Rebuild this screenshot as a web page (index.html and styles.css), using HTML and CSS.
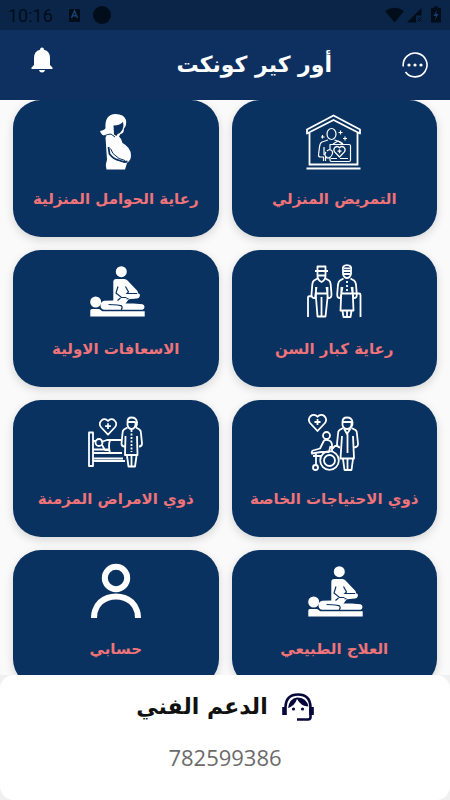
FILE: index.html
```html
<!DOCTYPE html>
<html lang="ar" dir="rtl">
<head>
  <meta charset="UTF-8">
  <meta name="viewport" content="width=device-width, initial-scale=1.0">
  <title>أور كير كونكت</title>
  <link rel="stylesheet" href="styles.css">
</head>
<body>
  <!-- Shared drawings -->
  <svg class="defs" aria-hidden="true">
    <symbol id="massage" viewBox="0 0 60 60">
      <circle cx="35.3" cy="11.7" r="5.5" fill="#fff"/>
      <path fill="#fff" d="M27.3 22q0-3 3-3h8q2 0 3.200 1.600L51.500 31q1 1.500 0 2.500h1.500q1.500 1 .8 2.700-.7 2.300-3 2.300l-8 .8-3.300 4.200h8l9 .7q2 .8 2 2.800t-2 2.800H18q-3.500-.7-3.500-4.500 0-3.500 3.500-4.500l9.300-.4z"/>
      <path fill="none" stroke="#0a3260" stroke-width="1.200" d="M22.500 44.500l9 .5 4 .8q1.500 2.500-.5 4M31.500 40.500l3-2.500M32 26.500l-2 6.500 5.500 4.500h5M39.500 26.500l3 5.500-1.500 1.500h10M42.500 38.500l-2 .3"/>
      <circle cx="9.700" cy="42" r="5.500" fill="#fff"/>
      <path fill="#fff" d="M4.300 50.500q0-1.500 1.500-1.500h7.500l3 2.300h42.400v5.200H4.300z"/>
    </symbol>
    <symbol id="heart" viewBox="0 0 20 20">
      <path d="M10 18.500L2.500 10.500C-1 5.500 5.500-1 10 4.200 14.500-1 21 5.500 17.500 10.500zM10 6.500v6M7 9.500h6"/>
    </symbol>
  </svg>

  <div class="app">
    <!-- Device status bar -->
    <div class="status-bar" dir="ltr">
      <span class="clock">10:16</span>
      <svg class="status-left" width="46" height="18" viewBox="0 0 46 18">
        <rect x="0" y="3" width="11" height="13" rx="1" fill="#020d1c"/>
        <path d="M2.500 12L5.500 5l3 7M3.500 9.800h4" fill="none" stroke="#17406e" stroke-width="1.500"/>
        <circle cx="33" cy="9" r="9" fill="#020d1c"/>
      </svg>
      <svg class="status-right" width="57" height="18" viewBox="0 0 57 18" fill="#020d1c">
        <path d="M0 5Q9.500-1.500 19 5L9.500 16.500zM22 16.500L36.500 2v7.500H31v7z"/>
        <path d="M32.500 11.500l4 4m0-4l-4 4" stroke="#020d1c"/>
        <path d="M49 2V.5h4V2h3v14.500H46V2z"/>
        <path d="M52 4l-3.500 6H51l-1 4 3.500-6H51z" fill="#17406e"/>
      </svg>
    </div>

    <!-- Header -->
    <header class="header">
      <button class="icon-button" type="button" aria-label="القائمة">
        <svg width="26" height="26" viewBox="0 0 26 26">
          <path d="M1.300 14.500A11.900 11.900 0 1 1 3.500 20" fill="none" stroke="#fff" stroke-width="1.600"/>
          <circle cx="7" cy="13" r="1.600" fill="#fff"/><circle cx="13" cy="13" r="1.600" fill="#fff"/><circle cx="19" cy="13" r="1.600" fill="#fff"/>
        </svg>
      </button>
      <h1>أور كير كونكت</h1>
      <button class="icon-button bell" type="button" aria-label="الإشعارات">
        <svg width="22" height="26" viewBox="0 0 22 26" fill="#fff">
          <path d="M9 2.800Q9 .5 11 .5t2 2.300q6 1.400 6 8.200v7l2.500 2.500V22H.5v-1.500L3 18v-7q0-6.800 6-8.200zM8 23h6q-.5 2.500-3 2.500T8 23z"/>
        </svg>
      </button>
    </header>

    <!-- Services -->
    <main class="services">
      <a class="card" href="#">
        <svg class="line" viewBox="0 0 60 60">
          <path d="M3 19.500L29.500 5.500 56 19.500v4L29.500 10 3 23.500zM5.500 23v32.500M53.500 23v32.500M5.500 54.500h48M2.500 58.500h54"/>
          <g class="thin">
            <ellipse cx="27.500" cy="24" rx="4.500" ry="5.500"/>
            <path d="M24 30l-6 2q-2 1-2.500 5l-1 8q0 2 2 2h3v4M20 37v8M30.500 30l6 2q2 .8 2.500 2.500M23.500 47h-2v4"/>
            <path d="M26 39v-4.500h19q1.500 0 1.500 1.500v14q0 1.500-1.500 1.500H27.500Q26 51.500 26 50v-3M23 41q2-2 4-1t1.500 3.500-3 4-4-1 .5-4.500M29 34l5-3 5 3.500M27 48.500h6M36 48.500h8"/>
            <path d="M36.500 20.500v4M34.500 22.500h4M41 26.500v4M39 28.500h4M18.500 25v3.500M17 27h3.500"/>
          </g>
          <use href="#heart" x="29" y="35" width="13" height="13" stroke-width="2"/>
        </svg>
        <span>التمريض المنزلي</span>
      </a>
      <a class="card" href="#">
        <svg viewBox="0 0 60 60">
          <path fill="#fff" d="M19.500 18q-1-13.500 10-14 8.500 0 10.500 6 1 5-2 8.500 0 5-3.500 5.500l-1.500 2.500q3 2.500 3.500 6.500 8.500 4.500 8.500 12.500 0 4.500-4 7.500l-2 6.500H20.500q-1.500-5 .5-10l-1.500-22 .8-1.500q-5 0-6.300-5 5-1 5.500-3z"/>
          <path fill="#0a3260" d="M27.500 15.500q6 0 9.500-3.500 1.500 6-2 9.500l-1 1.500q-3 .5-3.500 3l-2.500-1.500z"/>
          <path fill="none" stroke="#0a3260" stroke-width="1.800" d="M22.500 37l1 7q4 5 8.500 6l6.500 2 3-.5"/>
          <path fill="none" stroke="#0a3260" d="M24.500 38.500l2.500 5 6 5 6 2M17.500 26q5-2 7.500-2l4 3"/>
        </svg>
        <span>رعاية الحوامل المنزلية</span>
      </a>
      <a class="card" href="#">
        <svg class="line" viewBox="0 0 60 60">
          <path d="M11 11h13M13.500 10.500V6.500h8v4M13.500 11v5q0 4 4 6 4-2 4-6v-5M14 15.500h7"/>
          <path d="M13.500 18.500l-3.500 2q-1.500 1-1.700 4L7.500 34.500q0 4 3.500 3.500l1.500-11M21.500 18.500l3.500 2q1.500 1 1.700 4l.8 10q0 4-3.500 3.500l-1.500-11M12 27v11l1.500 18.500h8L23.500 38V27M11.500 33.500h12M17.500 37v19M4 57V37.500q0-1.500 3.500-1.500"/>
          <path d="M39 10q-1-4.800 4-4.800t4 4.800v4q-1 4-4 4t-4-4zM39 11h8M40 8.300h6M40 14h6"/>
          <path d="M39.500 18.500l-3.500 2q-1.500 1-2 4l-.8 10q0 4 3.300 3.500l2-11M46.500 18.500l3.500 2q1.500 1 2 4l.8 10q0 4-3.300 3.500l-2-11M37.500 27l-1 23.500h13L48.500 27M37.500 33.500H55q1.500 0 1.500 1.500v22M38.500 51l1 6h7l1-6M43 51v6"/>
          <path stroke-dasharray="2 2" d="M43 21v11"/>
        </svg>
        <span>رعاية كبار السن</span>
      </a>
      <a class="card" href="#">
        <svg viewBox="0 0 60 60"><use href="#massage"/></svg>
        <span>الاسعافات الاولية</span>
      </a>
      <a class="card" href="#">
        <svg class="line" viewBox="0 0 60 60">
          <use href="#heart" x="3.500" y="2.500" width="20" height="20"/>
          <circle cx="22.500" cy="25.500" r="3.500"/>
          <path d="M20 30.500l-4 8-7 2q-2 1-1 3l9-1.500M25 30.500q3 1 3 5v6M20 30.500q2.500-1.500 5 0M17 42h8l1.500-6M12 44v11M9 46h8M28 39l3-3h3"/>
          <circle cx="25.500" cy="50.500" r="9.300"/><circle cx="25.500" cy="50.500" r="5.500"/><circle cx="11.500" cy="57.500" r="2.500"/>
          <path d="M38.500 12q0-4.500 4.500-4.500 5 0 5.500 5 .5 3-1.500 5M38.500 12v3q1 4 4.500 4t4.500-4v-3M38.500 12h9"/>
          <path d="M39 18l-3.500 2q-1.500 1-1.500 4l-1 10q0 3 3 3.500M47.500 18l4 2q1.500 1 1.500 4l1 10q0 3-4 3.500M38 26l-1.500 22.500H50L49 26M40 18.500L43 24l3.500-5.500M43.500 24v19M39 49l1.500 11h7L49 49M43.500 49v11"/>
        </svg>
        <span>ذوي الاحتياجات الخاصة</span>
      </a>
      <a class="card" href="#">
        <svg class="line" viewBox="0 0 60 60">
          <use href="#heart" x="12.500" y="7" width="19" height="19"/>
          <path d="M3 22.500h4V56H3zM7 48.500h30M7 51h32M7 39.500h16M7 43h28M36 30H24q-2 6 0 13h12M15 32l6-2h3M16 35l3 5h4M7 31h3"/>
          <circle cx="13" cy="32.500" r="3.500"/>
          <path d="M41.500 12q0-4.500 4-4.500 5 0 5.500 5 .5 3-1.500 5M41.500 12v3q1 4 4 4t4-4v-3M41.500 12h8"/>
          <path d="M41.500 17.500l-3.500 2q-1.500 1-1.500 4l-1 10q0 3 3 3M50 17.500l3.500 2q1.500 1 1.500 4l1 10q0 3-3 3M39.500 26L39 45h12.500L51 26M41 46l1.500 10.500H49L50.500 46M45.500 46v10"/>
          <path stroke-dasharray="2 1.500" d="M45.500 20v22"/>
        </svg>
        <span>ذوي الامراض المزمنة</span>
      </a>
      <a class="card" href="#">
        <svg viewBox="0 0 60 60"><use href="#massage"/></svg>
        <span>العلاج الطبيعي</span>
      </a>
      <a class="card" href="#">
        <svg viewBox="0 0 60 60" fill="none" stroke="#fff" stroke-width="6">
          <circle cx="30" cy="18" r="11.200"/>
          <path d="M8 58q0-10 6.500-16 6.500-5.500 15.500-5.500T45.500 42Q52 48 52 58"/>
        </svg>
        <span>حسابي</span>
      </a>
    </main>

    <!-- Support -->
    <footer class="support">
      <h2>
        <svg width="32" height="28" viewBox="0 0 32 28" fill="none" stroke="#07073c" stroke-width="2.600">
          <path d="M3.500 14Q4 1.500 16 1.500T28.500 14v10q0 2.500-2.500 2.500H15"/>
          <path d="M2.500 14v8M29.500 14v8" stroke-width="4.600"/>
          <path fill="#07073c" stroke="none" d="M15 4.500q-7.500 1-9 10.500 7-2.500 9-9 4 7.500 11.500 7.500Q24.500 4.500 15 4.500z"/>
          <circle cx="11.500" cy="16" r="1.600" fill="#07073c" stroke="none"/><circle cx="20.500" cy="16" r="1.600" fill="#07073c" stroke="none"/>
        </svg>
        الدعم الفني
      </h2>
      <a class="phone" href="tel:782599386">782599386</a>
    </footer>
  </div>
</body>
</html>
```
FILE: styles.css
```css
* {
  margin: 0;
  padding: 0;
  box-sizing: border-box;
}

body {
  font-family: "DejaVu Sans", sans-serif;
  background: #f0f0f0;
}

.defs {
  position: absolute;
  width: 0;
  height: 0;
}

.app {
  display: flex;
  flex-direction: column;
  height: 100vh;
}

/* Device status bar */
.status-bar {
  display: flex;
  align-items: center;
  height: 30px;
  flex-shrink: 0;
  padding: 0 8px;
  background: #0a2547;
  color: #020d1c;
}

.clock {
  font-family: Roboto, sans-serif;
  font-size: 18px;
}

.status-left {
  margin-left: 16px;
}

.status-right {
  margin-left: auto;
}

/* Header */
.header {
  display: flex;
  align-items: center;
  height: 70px;
  flex-shrink: 0;
  padding: 0 22px;
  background: #0d3060;
  color: #fff;
}

.icon-button {
  display: flex;
  border: none;
  background: none;
  cursor: pointer;
}

.bell {
  margin-inline-start: auto;
  margin-inline-end: 9px;
  padding-bottom: 10px;
}

h1 {
  margin-inline-start: 70px;
  font-size: 22px;
  line-height: 40px;
}

/* Services */
.services {
  flex: 1;
  min-height: 0;
  display: grid;
  grid-template-columns: 1fr 1fr;
  grid-auto-rows: 137px;
  gap: 13px;
  padding: 0 13px;
  background: #fafafa;
  overflow-y: auto;
  scrollbar-width: none;
}

.card {
  display: flex;
  flex-direction: column;
  align-items: center;
  gap: 14px;
  padding-top: 10px;
  border-radius: 28px;
  background: #0a3260;
  box-shadow: 0 3px 10px rgba(0, 0, 0, 0.15);
  color: #ef7378;
  font-size: 15px;
  font-weight: bold;
  line-height: 30px;
  text-decoration: none;
  white-space: nowrap;
}

.card svg {
  width: 60px;
  height: 60px;
  overflow: visible;
}

.line {
  fill: none;
  stroke: #fff;
  stroke-width: 1.8;
  stroke-linejoin: round;
}

.thin {
  stroke-width: 1.2;
}

/* Support */
.support {
  display: flex;
  flex-direction: column;
  align-items: center;
  gap: 14px;
  padding: 12px 0 26px;
  border-radius: 14px;
  background: #fff;
}

h2 {
  display: flex;
  align-items: center;
  gap: 14px;
  color: #111;
  font-size: 22px;
  line-height: 40px;
}

.phone {
  color: #6b6b6b;
  font-family: "Open Sans", sans-serif;
  font-size: 22px;
  line-height: 33px;
  text-decoration: none;
}
```
